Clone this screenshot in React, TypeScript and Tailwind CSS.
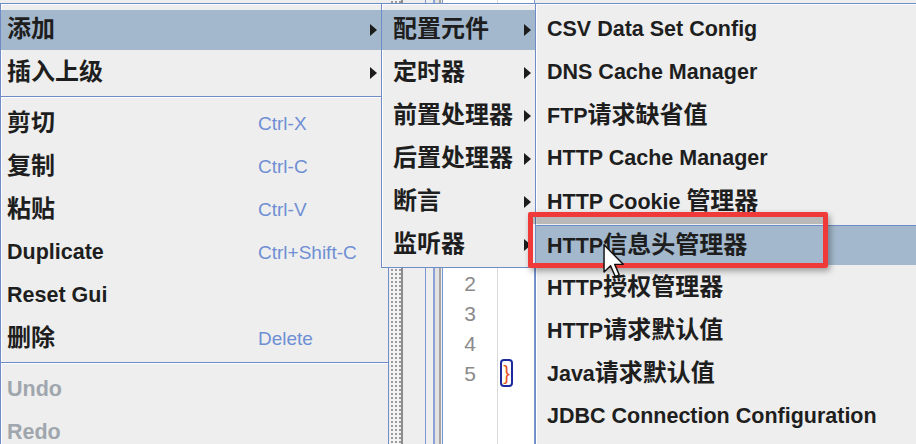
import React from "react";

const CJK = /([\u3400-\u9fff]+)/;

// latin text in Liberation Sans, Chinese runs slightly larger like the Swing menus
const Txt = ({ s }: { s: string }) => (
  <>
    {s
      .split(CJK)
      .filter(Boolean)
      .map((p, i) =>
        CJK.test(p) ? (
          <span key={i} className="text-[24px] leading-none">
            {p}
          </span>
        ) : (
          <span key={i}>{p}</span>
        )
      )}
  </>
);

const Arrow = () => (
  <span className="h-0 w-0 border-y-[6px] border-l-[7px] border-y-transparent border-l-[#1c1c1c]" />
);

type ItemProps = {
  label: string;
  shortcut?: string;
  sub?: boolean;
  active?: boolean;
  disabled?: boolean;
  labelWidth?: string;
  padding: string;
  topLine?: boolean;
};

const Item = (props: ItemProps) => (
  <div className="flex h-[43px] items-center">
    <div
      className={`flex h-[40px] w-full items-center ${props.padding} ${
        props.active ? "bg-[#a3b8cc]" : ""
      } ${props.topLine ? "border-t border-[#6f8cc6]" : ""}`}
    >
      <div
        className={`whitespace-nowrap text-[21.5px] font-bold leading-none ${
          props.disabled ? "text-[#a0a6ad]" : "text-[#1e1e1e]"
        } ${props.labelWidth ?? ""}`}
      >
        <Txt s={props.label} />
      </div>
      {props.shortcut && (
        <div className="text-[19px] leading-none text-[#6f8fd4]">
          {props.shortcut}
        </div>
      )}
      {props.sub && (
        <div className="ml-auto flex items-center">
          <Arrow />
        </div>
      )}
    </div>
  </div>
);

const Separator = () => (
  <div className="h-[8px] pt-[2px]">
    <div className="h-px bg-[#6f8cc6]" />
    <div className="h-px bg-white" />
  </div>
);

const menuBox =
  "absolute top-[3px] border border-[#6f8cc6] bg-[#eeeeee] pt-[4px] shadow-[inset_1px_1px_0_#ffffff]";

export default function App() {
  const p1 = "pl-[6px] pr-[11px]";
  const p2 = "pl-[11px] pr-[4px]";
  const p3 = "pl-[11px]";
  const lines = [1, 2, 3, 4, 5];

  return (
    <div className="relative h-[444px] w-[916px] overflow-hidden bg-[#e6e6e6] font-['Liberation_Sans','Noto_Sans_CJK_SC',sans-serif]">
      {/* application behind the popups */}
      <div className="flex h-full">
        <div className="w-[390px] bg-[#eeeeee]" />
        <div className="w-[13px] border-r-2 border-[#8c8c8c] bg-[#f3f3f3] bg-[radial-gradient(circle,#9a9a9a_0.9px,transparent_1.3px)] bg-[length:4px_4px]" />
        <div className="w-[22px] bg-[#eeeeee]" />
        <div className="flex w-[18px]">
          <div className="w-[8px] border-l border-[#7a98d0] bg-[#eeeeee]" />
          <div className="w-[2px] bg-[#8ba3d4]" />
          <div className="w-[4px] bg-[#e2e2e2]" />
          <div className="w-[2px] bg-[#a4a4a4]" />
          <div className="w-px bg-[#eeeeee]" />
          <div className="w-px bg-[#7a98d0]" />
        </div>
        <div className="flex w-[92px] border-r border-[#7a98d0] bg-white">
          <div className="flex w-[54px] flex-col items-center pt-[238px]">
            {lines.map((n) => (
              <div
                key={n}
                className="flex h-[30px] items-center text-[21px] leading-none text-[#8a8a8a]"
              >
                {n}
              </div>
            ))}
          </div>
          <div className="w-px bg-[#dadada]" />
          <div className="flex-1 pl-[2px] pt-[359px]">
            <div className="flex h-[28px] w-[13px] items-center justify-center rounded-[4px] border-2 border-[#1d2a9c] text-[20px] leading-none text-[#e8541c]">
              {"}"}
            </div>
          </div>
        </div>
        <div className="flex-1 bg-[#eeeeee]" />
      </div>

      {/* top popup menu */}
      <div className={`${menuBox} left-0 w-[389px]`}>
        <Item label="添加" sub active padding={p1} />
        <Item label="插入上级" sub padding={p1} />
        <Separator />
        <Item label="剪切" shortcut="Ctrl-X" labelWidth="w-[251px]" padding={p1} />
        <Item label="复制" shortcut="Ctrl-C" labelWidth="w-[251px]" padding={p1} />
        <Item label="粘贴" shortcut="Ctrl-V" labelWidth="w-[251px]" padding={p1} />
        <Item label="Duplicate" shortcut="Ctrl+Shift-C" labelWidth="w-[251px]" padding={p1} />
        <Item label="Reset Gui" labelWidth="w-[251px]" padding={p1} />
        <Item label="删除" shortcut="Delete" labelWidth="w-[251px]" padding={p1} />
        <Separator />
        <Item label="Undo" disabled padding={p1} />
        <Item label="Redo" disabled padding={p1} />
      </div>

      {/* 添加 submenu */}
      <div className={`${menuBox} left-[381px] w-[155px] pb-[1px]`}>
        <Item label="配置元件" sub active padding={p2} />
        <Item label="定时器" sub padding={p2} />
        <Item label="前置处理器" sub padding={p2} />
        <Item label="后置处理器" sub padding={p2} />
        <Item label="断言" sub padding={p2} />
        <Item label="监听器" sub padding={p2} />
      </div>

      {/* 配置元件 submenu */}
      <div className={`${menuBox} left-[535px] w-[420px] pb-[12px]`}>
        <Item label="CSV Data Set Config" padding={p3} />
        <Item label="DNS Cache Manager" padding={p3} />
        <Item label="FTP请求缺省值" padding={p3} />
        <Item label="HTTP Cache Manager" padding={p3} />
        <Item label="HTTP Cookie 管理器" padding={p3} />
        <Item label="HTTP信息头管理器" active topLine padding={p3} />
        <Item label="HTTP授权管理器" padding={p3} />
        <Item label="HTTP请求默认值" padding={p3} />
        <Item label="Java请求默认值" padding={p3} />
        <Item label="JDBC Connection Configuration" padding={p3} />
      </div>

      {/* red annotation box */}
      <div className="absolute left-[528px] top-[212px] h-[56px] w-[300px] rounded-[2px] border-[5px] border-[#f03a3a] shadow-[2px_3px_6px_rgba(0,0,0,0.35),inset_0_7px_0_rgba(0,0,0,0.22)]" />

      {/* mouse pointer */}
      <svg
        className="absolute left-[602px] top-[243px]"
        width="24"
        height="38"
        viewBox="0 0 13 21"
      >
        <path
          d="M1 1 L1 16 L4.6 12.6 L7.2 18.6 L9.4 17.6 L6.9 11.8 L11.6 11.8 Z"
          fill="#ffffff"
          stroke="#111111"
          strokeWidth="0.8"
          strokeLinejoin="round"
        />
      </svg>
    </div>
  );
}
